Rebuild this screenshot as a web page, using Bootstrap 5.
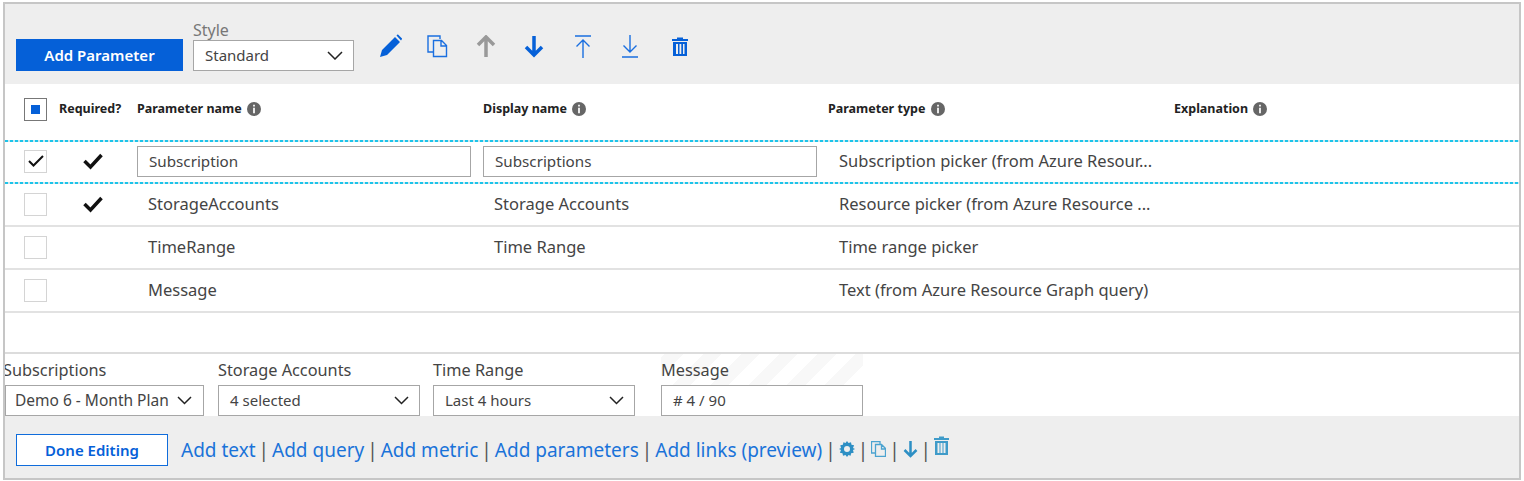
<!DOCTYPE html>
<html lang="en">
<head>
  <meta charset="UTF-8">
  <title>Parameters</title>
  <meta name="viewport" content="width=device-width, initial-scale=1.0">
  <link href="https://cdn.jsdelivr.net/npm/bootstrap@5.3.0/dist/css/bootstrap.min.css" rel="stylesheet">
  <style>
    body {
      background: #fff;
      color: #333;
      font-family: "Noto Sans", "Open Sans", sans-serif;
      font-size: 16px;
      margin: 0;
      height: 481px;
      overflow: hidden;
    }

    .frame {
      margin: 2px 3px 0 3px;
      height: 478px;
      border: 2px solid #c6c6c6;
      display: flex;
      flex-direction: column;
    }

    .top-bar {
      height: 80px;
      background: #eee;
      padding: 0 0 13px 11px;
    }

    .btn-add {
      width: 167px;
      height: 32px;
      background: #0560d8;
      color: #fff;
      border: 0;
      border-radius: 0;
      font-size: 15px;
      font-weight: 600;
      padding: 0;
    }

    .field-label {
      font-size: 16.3px;
      line-height: 22px;
      padding-bottom: 4px;
      color: #444;
      white-space: nowrap;
    }

    .style-wrap { width: 161px; margin-left: 10px; }
    .style-label { color: #777; font-size: 16px; line-height: 20px; }

    .fake-select {
      height: 31px;
      background: #fff;
      border: 1px solid #a6a6a6;
      display: flex;
      align-items: center;
      justify-content: space-between;
      font-size: 15px;
      color: #444;
      padding: 0 10px 0 11px;
      white-space: nowrap;
    }

    .fake-select.plan-select { font-size: 15.5px; padding-left: 9px; padding-right: 11px; }

    .tool-icons { padding-left: 25px; padding-bottom: 13px; }
    .tool-icons svg { display: block; }

    .grid-line {
      display: grid;
      grid-template-columns: 54px 78px 346px 345px 346px 1fr;
      align-items: center;
    }

    .head-line { height: 56px; font-size: 12.5px; font-weight: 700; color: #222; padding-bottom: 6px; }

    .data-line { height: 43px; border-bottom: 2px solid #e2e2e2; font-size: 16.5px; color: #444; }
    .data-line.picked {
      height: 44px;
      border-bottom: 0;
      padding-bottom: 2px;
      background:
        repeating-linear-gradient(90deg, #1cc4ea 0 3px, #cfe6ec 3px 5px) top / 100% 2px no-repeat,
        repeating-linear-gradient(90deg, #1cc4ea 0 3px, #cfe6ec 3px 5px) bottom / 100% 2px no-repeat;
    }

    .cell-check { padding-left: 19px; }
    .cell-text { padding-left: 11px; white-space: nowrap; }
    .cell-req { padding-left: 24px; }
    .cell-req svg { display: block; }

    .tick-box {
      width: 23px;
      height: 23px;
      border: 1px solid #d4d4d4;
      background: #fff;
      display: flex;
      align-items: center;
      justify-content: center;
    }

    .tick-box.partial { border-color: #777; }
    .tick-box.partial i { display: block; width: 9px; height: 9px; background: #0560d8; }

    .name-input {
      width: 334px;
      height: 31px;
      border: 1px solid #a6a6a6;
      font-size: 15.2px;
      color: #444;
      padding: 0 11px;
      display: flex;
      align-items: center;
    }

    .info-dot {
      display: inline-flex;
      width: 14px;
      height: 14px;
      margin-left: 2px;
      vertical-align: -3px;
    }

    .spacer-area { height: 41px; border-bottom: 2px solid #dcdcdc; }

    .params-area { height: 62px; position: relative; overflow: hidden; }
    .param-field { display: flex; flex-direction: column; justify-content: flex-end; height: 62px; position: relative; }
    .field-sub { width: 199px; margin-right: 14px; }
    .field-sub .field-label { margin-left: -2px; }
    .field-store { width: 202px; margin-right: 13px; }
    .field-time { width: 202px; margin-right: 26px; }
    .field-msg { width: 202px; }

    .stripes {
      position: absolute;
      left: 656px;
      top: 0;
      width: 202px;
      height: 31px;
      background: repeating-linear-gradient(-45deg, #fff 0 14px, #f8f8f8 14px 27px);
    }

    .bottom-bar {
      flex: 1;
      background: #eee;
      padding: 6px 0 0 11px;
      font-size: 19px;
      white-space: nowrap;
    }

    .btn-done {
      width: 152px;
      height: 32px;
      background: #fff;
      color: #0560d8;
      border: 1px solid #0f6cdb;
      border-radius: 0;
      font-size: 15px;
      font-weight: 600;
      padding: 0;
      margin-right: 13px;
    }

    .add-link { color: #1a73d9; text-decoration: none; }
    .pipe { color: #555; margin: 0 3px; }
    .mini-icon { display: inline-block; flex: none; margin-top: -2px; }
    .lift-icon { margin-top: -9px; }
  </style>
</head>
<body>

  <div class="frame">

    <!-- Barra superior -->
    <div class="top-bar d-flex align-items-end">
      <button class="btn btn-add" type="button">Add Parameter</button>
      <div class="style-wrap">
        <div class="style-label">Style</div>
        <div class="fake-select">Standard
          <svg width="16" height="9" viewBox="0 0 16 9"><path d="M1 1l7 7 7-7" fill="none" stroke="#222" stroke-width="1.5"/></svg>
        </div>
      </div>
      <div class="tool-icons d-flex align-items-center">
        <svg width="24" height="24" viewBox="0 0 24 24" style="margin-right:24px"><path d="M1 23l2-7L16 3l5 5L8 21zM17.500 1.500l1-1 .5 0 4 4v.5l-1 1.500z" fill="#0560d8"/></svg>
        <svg width="21" height="23" viewBox="0 0 21 23" style="margin-right:28px"><path d="M13 4V1H1v16h5M6.500 5.500h8l5 5v11h-13zM14 6v5h5" fill="none" stroke="#1a6fe0" stroke-width="1.400"/></svg>
        <svg width="20" height="23" viewBox="0 0 20 23" style="margin-right:28px"><path d="M10 22V3M2 10l8-8 8 8" fill="none" stroke="#999" stroke-width="3.500"/></svg>
        <svg width="20" height="23" viewBox="0 0 20 23" style="margin-right:31px"><path d="M10 1v19M2 12l8 8 8-8" fill="none" stroke="#0560d8" stroke-width="3.500"/></svg>
        <svg width="16" height="23" viewBox="0 0 16 23" style="margin-right:31px"><path d="M0 1h16M8 23V5M1.500 11.500L8 5l6.500 6.500" fill="none" stroke="#1a6fe0" stroke-width="1.400"/></svg>
        <svg width="16" height="23" viewBox="0 0 16 23" style="margin-right:34px"><path d="M8 0v17M1.500 10.500L8 17l6.500-6.500M0 22h16" fill="none" stroke="#1a6fe0" stroke-width="1.400"/></svg>
        <svg width="16" height="19" viewBox="0 0 16 19"><path d="M5 2V.5h6V2h5v2H0V2zM1 5h14v14H1zM4 7v10h2V7zm3.500 0v10h1.800V7zM11 7v10h1.500V7z" fill="#0560d8" fill-rule="evenodd"/></svg>
      </div>
    </div>

    <!-- Cabeçalho -->
    <div class="grid-line head-line">
      <div class="cell-check"><span class="tick-box partial"><i></i></span></div>
      <div>Required?</div>
      <div>Parameter name <span class="info-dot"><svg width="14" height="14" viewBox="0 0 13 13"><circle cx="6.500" cy="6.500" r="6.500" fill="#666"/><path d="M5.700 2.500h1.600v1.600H5.700zM5.700 5.300h1.600v5.200H5.700z" fill="#fff"/></svg></span></div>
      <div>Display name <span class="info-dot"><svg width="14" height="14" viewBox="0 0 13 13"><circle cx="6.500" cy="6.500" r="6.500" fill="#666"/><path d="M5.700 2.500h1.600v1.600H5.700zM5.700 5.300h1.600v5.200H5.700z" fill="#fff"/></svg></span></div>
      <div>Parameter type <span class="info-dot"><svg width="14" height="14" viewBox="0 0 13 13"><circle cx="6.500" cy="6.500" r="6.500" fill="#666"/><path d="M5.700 2.500h1.600v1.600H5.700zM5.700 5.300h1.600v5.200H5.700z" fill="#fff"/></svg></span></div>
      <div>Explanation <span class="info-dot"><svg width="14" height="14" viewBox="0 0 13 13"><circle cx="6.500" cy="6.500" r="6.500" fill="#666"/><path d="M5.700 2.500h1.600v1.600H5.700zM5.700 5.300h1.600v5.200H5.700z" fill="#fff"/></svg></span></div>
    </div>

    <!-- Linhas -->
    <div class="grid-line data-line picked">
      <div class="cell-check"><span class="tick-box"><svg width="16" height="12" viewBox="0 0 16 12"><path d="M1 6l4.500 4.500L15 1" fill="none" stroke="#111" stroke-width="2"/></svg></span></div>
      <div class="cell-req"><svg width="20" height="17" viewBox="0 0 20 17"><path d="M1.500 8l6 6L18.500 2" fill="none" stroke="#111" stroke-width="3.500"/></svg></div>
      <div><div class="name-input">Subscription</div></div>
      <div><div class="name-input">Subscriptions</div></div>
      <div class="cell-text">Subscription picker (from Azure Resour...</div>
      <div></div>
    </div>
    <div class="grid-line data-line">
      <div class="cell-check"><span class="tick-box"></span></div>
      <div class="cell-req"><svg width="20" height="17" viewBox="0 0 20 17"><path d="M1.500 8l6 6L18.500 2" fill="none" stroke="#111" stroke-width="3.500"/></svg></div>
      <div class="cell-text">StorageAccounts</div>
      <div class="cell-text">Storage Accounts</div>
      <div class="cell-text">Resource picker (from Azure Resource ...</div>
      <div></div>
    </div>
    <div class="grid-line data-line">
      <div class="cell-check"><span class="tick-box"></span></div>
      <div></div>
      <div class="cell-text">TimeRange</div>
      <div class="cell-text">Time Range</div>
      <div class="cell-text">Time range picker</div>
      <div></div>
    </div>
    <div class="grid-line data-line">
      <div class="cell-check"><span class="tick-box"></span></div>
      <div></div>
      <div class="cell-text">Message</div>
      <div></div>
      <div class="cell-text">Text (from Azure Resource Graph query)</div>
      <div></div>
    </div>

    <div class="spacer-area"></div>

    <!-- Parâmetros -->
    <div class="params-area d-flex">
      <div class="stripes"></div>
      <div class="param-field field-sub">
        <div class="field-label">Subscriptions</div>
        <div class="fake-select plan-select">Demo 6 - Month Plan
          <svg width="15" height="9" viewBox="0 0 15 9"><path d="M1 1l6.500 6.500L14 1" fill="none" stroke="#222" stroke-width="1.500"/></svg>
        </div>
      </div>
      <div class="param-field field-store">
        <div class="field-label">Storage Accounts</div>
        <div class="fake-select">4 selected
          <svg width="15" height="9" viewBox="0 0 15 9"><path d="M1 1l6.500 6.500L14 1" fill="none" stroke="#222" stroke-width="1.500"/></svg>
        </div>
      </div>
      <div class="param-field field-time">
        <div class="field-label">Time Range</div>
        <div class="fake-select">Last 4 hours
          <svg width="15" height="9" viewBox="0 0 15 9"><path d="M1 1l6.500 6.500L14 1" fill="none" stroke="#222" stroke-width="1.500"/></svg>
        </div>
      </div>
      <div class="param-field field-msg">
        <div class="field-label">Message</div>
        <div class="fake-select"># 4 / 90</div>
      </div>
    </div>

    <!-- Barra inferior -->
    <div class="bottom-bar d-flex align-items-center">
      <button class="btn btn-done" type="button">Done Editing</button>
      <a class="add-link" href="#">Add text</a><span class="pipe">|</span>
      <a class="add-link" href="#">Add query</a><span class="pipe">|</span>
      <a class="add-link" href="#">Add metric</a><span class="pipe">|</span>
      <a class="add-link" href="#">Add parameters</a><span class="pipe">|</span>
      <a class="add-link" href="#">Add links (preview)</a><span class="pipe">|</span>
      <svg class="mini-icon" width="16" height="16" viewBox="0 0 16 16"><path d="M8 0l1.500 2 2.500-.8.500 2.600 2.600.5L14 7l2 1-2 1 .7 2.700-2.600.5-.5 2.600-2.100-.8L8 16l-1.500-2-2.500.8-.5-2.600-2.600-.5L2 9 0 8l2-1-.7-2.700 2.600-.5.500-2.600L6.500 2zM8 5a3 3 0 100 6 3 3 0 000-6z" fill="#2d8fc4" fill-rule="evenodd"/></svg>
      <span class="pipe">|</span>
      <svg class="mini-icon" width="15" height="16" viewBox="0 0 15 16"><path d="M9 3V.5H.5V12H4M4.500 3.500h6l4 4v8h-10zM10.500 4v4h4" fill="none" stroke="#4ba3d0" stroke-width="1.300"/></svg>
      <span class="pipe">|</span>
      <svg class="mini-icon" width="15" height="17" viewBox="0 0 15 17"><path d="M7.500 0v15M1.500 9l6 6 6-6" fill="none" stroke="#2d8fc4" stroke-width="2.500"/></svg>
      <span class="pipe">|</span>
      <svg class="mini-icon lift-icon" width="15" height="19" viewBox="0 0 15 19"><path d="M5 2V.5h5V2h5v2H0V2zM1 5h13v14H1zM3.500 7v10h2V7zm3 0v10h2V7zm3 0v10h2V7z" fill="#3f9bc9" fill-rule="evenodd"/></svg>
    </div>

  </div>

</body>
</html>
